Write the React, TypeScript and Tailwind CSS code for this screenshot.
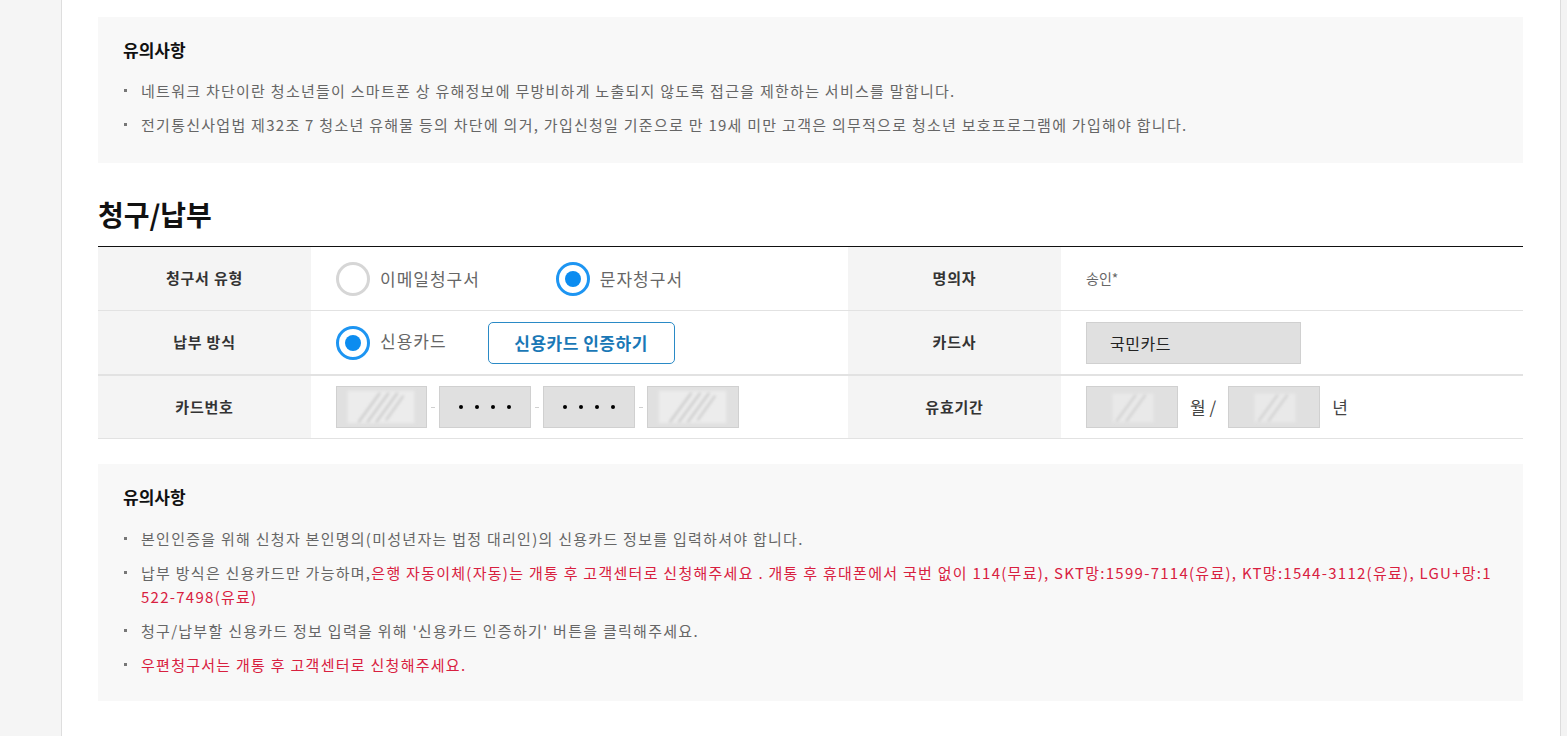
import React from "react";

const FONT = { fontFamily: '"Noto Sans CJK KR", "Noto Sans", sans-serif' };

function Bullet({ children, red }: { children: React.ReactNode; red?: boolean }) {
  return (
    <li className={`flex items-start text-[15px] leading-[24px] ${red ? "text-[#d8203f]" : "text-[#666]"}`}>
      <span className="mt-[10px] mr-[14px] ml-[1px] h-[3px] w-[3px] shrink-0 bg-[#777]" />
      <span className="break-all tracking-[1.27px]">{children}</span>
    </li>
  );
}

function Radio({ checked }: { checked?: boolean }) {
  return checked ? (
    <span className="flex h-[34px] w-[34px] items-center justify-center rounded-full border-[3px] border-[#1d95f2] bg-white">
      <span className="h-[16px] w-[16px] rounded-full bg-[#0b8cf0]" />
    </span>
  ) : (
    <span className="h-[34px] w-[34px] rounded-full border-[3px] border-[#d6d6d6] bg-white" />
  );
}

function Masked({ w = 91 }: { w?: number }) {
  return (
    <div className="relative h-[42px] overflow-hidden border border-[#d0d0d0] bg-[#e0e0e0]" style={{ width: w }}>
      <svg className="absolute inset-0 h-full w-full" viewBox="0 0 91 42" preserveAspectRatio="none">
        <defs>
          <filter id="bl" x="-20%" y="-20%" width="140%" height="140%">
            <feGaussianBlur stdDeviation="1.6" />
          </filter>
        </defs>
        <rect x="11" y="4" width="68" height="34" fill="#ececec" filter="url(#bl)" />
        <g filter="url(#bl)" stroke="#bcbcbc" strokeWidth="1.5">
          <line x1="22" y1="37" x2="44" y2="6" />
          <line x1="31" y1="37" x2="53" y2="6" />
          <line x1="40" y1="37" x2="62" y2="6" />
          <line x1="50" y1="35" x2="68" y2="9" />
        </g>
      </svg>
    </div>
  );
}

function MaskedSmall() {
  return (
    <div className="relative h-[42px] w-[92px] overflow-hidden border border-[#d0d0d0] bg-[#e0e0e0]">
      <svg className="absolute inset-0 h-full w-full" viewBox="0 0 92 42" preserveAspectRatio="none">
        <defs>
          <filter id="bl2" x="-20%" y="-20%" width="140%" height="140%">
            <feGaussianBlur stdDeviation="1.4" />
          </filter>
        </defs>
        <rect x="26" y="7" width="42" height="30" fill="#e9e9e9" filter="url(#bl2)" />
        <g filter="url(#bl2)" stroke="#c0c0c0" strokeWidth="1.4">
          <line x1="30" y1="36" x2="50" y2="8" />
          <line x1="40" y1="36" x2="60" y2="8" />
        </g>
      </svg>
    </div>
  );
}

function Dots() {
  return (
    <div className="flex h-[42px] w-[92px] items-center justify-center gap-[12px] border border-[#d0d0d0] bg-[#e0e0e0]">
      {[0, 1, 2, 3].map((i) => (
        <span key={i} className="h-[4px] w-[4px] rounded-full bg-black" />
      ))}
    </div>
  );
}

function Dash() {
  return <span className="mx-[4px] h-[1px] w-[4px] bg-[#d0d0d0]" />;
}

function Label({ children }: { children: React.ReactNode }) {
  return (
    <div className="flex items-center justify-center bg-[#f4f4f4] text-[15px] font-bold tracking-[0.8px] text-[#333]">
      {children}
    </div>
  );
}

export default function App() {
  return (
    <div className="flex min-h-[736px] w-full bg-white" style={FONT}>
      <div className="w-[62px] shrink-0 border-r border-[#dedede] bg-[#f5f5f5]" />
      <main className="min-w-0 flex-1 pl-[36px] pr-[37px] pt-[17px] pb-[35px]">
        {/* Notice 1 */}
        <section className="bg-[#f8f8f8] px-[25px] pt-[20px] pb-[26px]">
          <h3 className="text-[17px] font-bold leading-[25px] text-[#111]">유의사항</h3>
          <ul className="mt-[17px] flex flex-col gap-[10px]">
            <Bullet>네트워크 차단이란 청소년들이 스마트폰 상 유해정보에 무방비하게 노출되지 않도록 접근을 제한하는 서비스를 말합니다.</Bullet>
            <Bullet>
              전기통신사업법 제32조 7 청소년 유해물 등의 차단에 의거, 가입신청일 기준으로 만 19세 미만 고객은 의무적으로 청소년 보호프로그램에 가입해야 합니다.
            </Bullet>
          </ul>
        </section>

        {/* Section title */}
        <h2 className="mt-[32px] text-[28px] font-bold leading-[38px] text-[#111]">청구/납부</h2>

        <div className="mt-[13px] border-t border-[#111]">
          <div className="grid grid-cols-[213px_537px_213px_1fr]">
            <Label>청구서 유형</Label>
            <div className="flex h-[63px] items-center px-[25px] text-[17px] tracking-[1px] text-[#666]">
              <label className="flex items-center">
                <Radio />
                <span className="ml-[10px]">이메일청구서</span>
              </label>
              <label className="ml-[76px] flex items-center">
                <Radio checked />
                <span className="ml-[10px]">문자청구서</span>
              </label>
            </div>
            <Label>명의자</Label>
            <div className="flex items-center px-[25px] text-[14px] text-[#666]">송인*</div>
          </div>
          <div className="grid grid-cols-[213px_537px_213px_1fr] border-t border-[#e2e2e2]">
            <Label>납부 방식</Label>
            <div className="flex h-[63px] items-center px-[25px] text-[17px] tracking-[1px] text-[#666]">
              <label className="flex items-center">
                <Radio checked />
                <span className="-mt-[4px] ml-[10px]">신용카드</span>
              </label>
              <button className="ml-[41px] flex h-[42px] w-[187px] items-center justify-center rounded-[5px] border border-[#2a8ac6] bg-white text-[17px] font-bold tracking-[0.5px] text-[#1a78b6]">
                신용카드 인증하기
              </button>
            </div>
            <Label>카드사</Label>
            <div className="flex items-center px-[25px]">
              <div className="flex h-[42px] w-[215px] items-center border border-[#d0d0d0] bg-[#e0e0e0] px-[23px] text-[16px] tracking-[0.5px] text-[#222]">
                국민카드
              </div>
            </div>
          </div>
          <div className="grid grid-cols-[213px_537px_213px_1fr] border-t-2 border-b border-[#e2e2e2]">
            <Label>카드번호</Label>
            <div className="flex h-[62px] items-center px-[25px]">
              <Masked />
              <Dash />
              <Dots />
              <Dash />
              <Dots />
              <Dash />
              <Masked w={92} />
            </div>
            <Label>유효기간</Label>
            <div className="flex items-center px-[25px] text-[17px] text-[#444]">
              <MaskedSmall />
              <span className="mx-[12px]">월 /</span>
              <MaskedSmall />
              <span className="ml-[12px]">년</span>
            </div>
          </div>
        </div>

        {/* Notice 2 */}
        <section className="mt-[25px] bg-[#f8f8f8] px-[25px] pt-[20px] pb-[24px]">
          <h3 className="text-[17px] font-bold leading-[25px] text-[#111]">유의사항</h3>
          <ul className="mt-[18px] flex flex-col gap-[10px]">
            <Bullet>본인인증을 위해 신청자 본인명의(미성년자는 법정 대리인)의 신용카드 정보를 입력하셔야 합니다.</Bullet>
            <Bullet>
              납부 방식은 신용카드만 가능하며,
              <span className="text-[#d8203f]">
                은행 자동이체(자동)는 개통 후 고객센터로 신청해주세요 . 개통 후 휴대폰에서 국번 없이 114(무료), SKT망:1599-7114(유료), KT망:1544-3112(유료), LGU+망:1522-7498(유료)
              </span>
            </Bullet>
            <Bullet>청구/납부할 신용카드 정보 입력을 위해 '신용카드 인증하기' 버튼을 클릭해주세요.</Bullet>
            <Bullet red>우편청구서는 개통 후 고객센터로 신청해주세요.</Bullet>
          </ul>
        </section>
      </main>
      <div className="w-[7px] shrink-0 border-l border-[#dcdcdc] bg-[#f3f3f3]" />
    </div>
  );
}
